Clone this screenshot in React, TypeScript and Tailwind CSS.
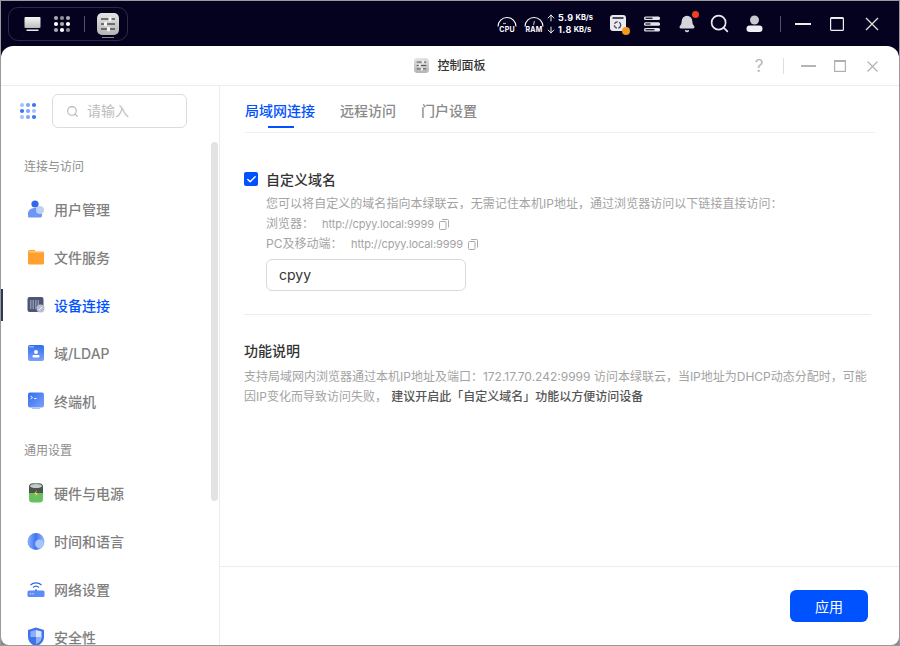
import React from "react";
import { Search, Check, ArrowUp, ArrowDown, Bell } from "lucide-react";

const font = { fontFamily: '"Inter","Noto Sans CJK SC",sans-serif' };

function Dots({ colors, size = 18 }: { colors: string[]; size?: number }) {
  const cells = [0, 1, 2, 3, 4, 5, 6, 7, 8];
  return (
    <svg width={size} height={size} viewBox="0 0 18 18">
      {cells.map((i) => (
        <circle key={i} cx={3 + (i % 3) * 6} cy={3 + Math.floor(i / 3) * 6} r="2.1" fill={colors[i]} />
      ))}
    </svg>
  );
}

function PanelIcon({ size }: { size: number }) {
  return (
    <svg width={size} height={size} viewBox="0 0 22 22">
      <defs>
        <linearGradient id="pg" x1="0" y1="0" x2="0" y2="1">
          <stop offset="0" stopColor="#e4e4e4" />
          <stop offset="1" stopColor="#b4b4b4" />
        </linearGradient>
      </defs>
      <rect width="22" height="22" rx="5" fill="url(#pg)" />
      <path d="M4 6h14M4 11h14M4 16h14" stroke="#4f4f4f" strokeWidth="1.4" />
      <g fill="#f4f4f4">
        <rect x="11.500" y="3.800" width="3" height="4.400" rx="1" />
        <rect x="7" y="8.800" width="3" height="4.400" rx="1" />
        <rect x="10" y="13.800" width="3" height="4.400" rx="1" />
      </g>
    </svg>
  );
}

function Gauge({ label, needle }: { label: string; needle: string }) {
  return (
    <div className="flex flex-col items-center w-[20px]">
      <svg width="20" height="12" viewBox="0 0 20 12" fill="none">
        <path d="M1 11.500a9 9 0 0 1 18 0" stroke="#fff" strokeWidth="1.100" />
        <path d={needle} stroke="#aaa" strokeWidth="1.200" />
      </svg>
      <span className="text-[7px] leading-[7px] font-bold text-white mt-[-1px] tracking-[0.2px]">{label}</span>
    </div>
  );
}

function CopyIcon() {
  return (
    <svg width="10" height="11" viewBox="0 0 10 11" fill="none" stroke="#aaaaaa" strokeWidth="1" className="ml-[5px] mt-[1px]">
      <rect x="0.500" y="2.500" width="6.500" height="8" rx="1" />
      <path d="M3 0.500h5.500a1 1 0 0 1 1 1v7" />
    </svg>
  );
}

function TopBar() {
  return (
    <div className="h-[45px] flex items-center justify-between shrink-0 pl-[7px] pr-[20px] text-white">
      <div className="h-[34px] w-[120px] rounded-[10px] border border-[#2c2a44] flex items-center pl-[15px]">
        <svg width="17" height="15" viewBox="0 0 17 15" className="mt-[1px]">
          <defs>
            <linearGradient id="mon" x1="0" y1="0" x2="0" y2="1">
              <stop offset="0" stopColor="#f8f8f8" />
              <stop offset="1" stopColor="#bbb" />
            </linearGradient>
          </defs>
          <rect x="0.500" y="0" width="16" height="11" rx="1" fill="url(#mon)" />
          <rect x="2.500" y="12.500" width="12" height="1.400" fill="#fff" />
        </svg>
        <div className="ml-[12px] mt-[1px]">
          <Dots size={18} colors={["#a9a9b3", "#8d8d98", "#a9a9b3", "#fff", "#a9a9b3", "#fff", "#a9a9b3", "#fff", "#8d8d98"]} />
        </div>
        <div className="w-px h-[16px] bg-[#55546a] ml-[13px]" />
        <div className="ml-[12px] relative">
          <PanelIcon size={22} />
          <div className="absolute left-[5px] right-[5px] bottom-[-3px] h-[1px] bg-[#888]" />
        </div>
      </div>
      <div className="flex items-center">
        <div className="flex items-center gap-[7px]">
          <Gauge label="CPU" needle="M6 8.500h3" />
          <Gauge label="RAM" needle="M10.500 6l-1 4" />
        </div>
        <div className="ml-[2px] w-[48px] flex flex-col text-[9px] leading-[12px] font-bold">
          <div className="flex items-center"><ArrowUp size={10} strokeWidth={2.200} /><span className="ml-[2px] tracking-[0.4px]">5.9</span><span className="text-[7.500px] ml-[2px]">KB/s</span></div>
          <div className="flex items-center"><ArrowDown size={10} strokeWidth={2.200} /><span className="ml-[2px] tracking-[0.4px]">1.8</span><span className="text-[7.500px] ml-[2px]">KB/s</span></div>
        </div>
        <div className="ml-[16px] relative w-[17px] h-[17px]">
          <svg width="17" height="17" viewBox="0 0 17 17" fill="none">
            <rect width="16" height="16" rx="3" fill="#e9e9ee" />
            <rect x="2.500" y="2" width="11" height="2" fill="#4a4a60" />
            <circle cx="7.500" cy="10" r="3.200" stroke="#4a4a60" strokeWidth="1.300" strokeDasharray="4 1.500" />
          </svg>
          <div className="absolute right-[-3px] bottom-[-3px] w-[8px] h-[8px] rounded-full bg-[#f39a1e]" />
        </div>
        <div className="ml-[17px]">
          <svg width="16" height="16" viewBox="0 0 16 16" fill="#e4e4ea">
            <rect y="0.500" width="16" height="3.600" rx="1.600" />
            <rect y="6.200" width="16" height="3.600" rx="1.600" />
            <rect y="11.900" width="16" height="3.600" rx="1.600" />
            <rect x="1.500" y="1.600" width="7" height="1.400" fill="#26243c" />
            <rect x="1.500" y="7.300" width="5" height="1.400" fill="#26243c" />
            <rect x="1.500" y="13" width="9" height="1.400" fill="#26243c" />
          </svg>
        </div>
        <div className="ml-[18px] relative">
          <Bell size={18} fill="#d5d5dc" stroke="#d5d5dc" />
          <div className="absolute top-[-4px] right-[-3px] w-[7px] h-[7px] rounded-full bg-[#f0401f]" />
        </div>
        <div className="ml-[13px]"><Search size={21} strokeWidth={1.900} color="#ececf0" /></div>
        <div className="ml-[16px]">
          <svg width="17" height="18" viewBox="0 0 17 18" fill="#f0f0f4">
            <circle cx="8.500" cy="5" r="4.500" fill="#c9c9d0" />
            <rect x="0.500" y="10.500" width="16" height="6.500" rx="3.200" />
          </svg>
        </div>
        <div className="ml-[17px] w-px h-[16px] bg-[#55546a]" />
        <div className="ml-[14px] w-[16px] h-[2px] bg-[#eeeeee]" />
        <svg width="14" height="14" viewBox="0 0 14 14" fill="none" className="ml-[19px]">
          <rect x="0.600" y="0.600" width="12.800" height="12.800" rx="1" stroke="#f0f0f0" strokeWidth="1.200" />
          <path d="M1 1.200h12" stroke="#f0f0f0" strokeWidth="1.500" />
        </svg>
        <svg width="14" height="14" viewBox="0 0 14 14" fill="none" className="ml-[21px]">
          <path d="M1 1l12 12M13 1L1 13" stroke="#e8e8e8" strokeWidth="1.200" />
        </svg>
      </div>
    </div>
  );
}

function UserIcon() {
  return (
    <svg width="18" height="18" viewBox="0 0 18 18">
      <circle cx="8" cy="4" r="3.600" fill="#3566e8" />
      <path d="M1 14c0-4 3-6 7-6s7 2 7 6-1 3.500-3 3.500H3c-2 0-2 0-2-3.500z" fill="#6c97f5" />
      <circle cx="13" cy="10" r="4" fill="#bcd0fb" />
    </svg>
  );
}
function FolderIcon() {
  return (
    <svg width="18" height="18" viewBox="0 0 18 18">
      <path d="M1.500 3a1 1 0 0 1 1-1h5l1.500 1.500H16a1 1 0 0 1 1 1V15a1.500 1.500 0 0 1-1.500 1.500h-13A1.500 1.500 0 0 1 1 15V3z" fill="#ffa02f" />
      <rect x="2" y="3.400" width="14" height="1" fill="#ffd9a6" />
    </svg>
  );
}
function DeviceIcon() {
  return (
    <svg width="18" height="18" viewBox="0 0 18 18">
      <rect x="0.500" y="1" width="16" height="15" rx="2" fill="#4d5676" />
      <path d="M3 4h1.500v9H3zM5.500 4H7v9H5.500zM8 4h1.500v9H8zM10.500 4H12v9h-1.500z" fill="#8d94ad" />
      <circle cx="13.500" cy="12.500" r="4" fill="#b9bdd2" />
      <path d="M12 14l3-3" stroke="#fff" strokeWidth="1" />
    </svg>
  );
}
function LdapIcon() {
  return (
    <svg width="18" height="18" viewBox="0 0 18 18">
      <defs>
        <linearGradient id="blue1" x1="0" y1="0" x2="0" y2="1">
          <stop offset="0" stopColor="#2f6cf0" />
          <stop offset="1" stopColor="#7fa2fa" />
        </linearGradient>
      </defs>
      <rect x="1" y="1" width="16" height="16" rx="2" fill="url(#blue1)" />
      <rect x="2" y="2.500" width="5" height="0.800" fill="#cfe0ff" />
      <circle cx="9" cy="8" r="2" fill="#fff" />
      <rect x="5.500" y="11" width="7" height="2.400" rx="1" fill="#fff" />
    </svg>
  );
}
function TermIcon() {
  return (
    <svg width="18" height="18" viewBox="0 0 18 18">
      <defs>
        <linearGradient id="blue2" x1="0" y1="0" x2="1" y2="1">
          <stop offset="0" stopColor="#2f6cf0" />
          <stop offset="1" stopColor="#7fa2fa" />
        </linearGradient>
      </defs>
      <rect x="1" y="0.500" width="16" height="15" rx="2" fill="url(#blue2)" />
      <rect x="5" y="16" width="8" height="1" fill="#a9c2fb" />
      <path d="M3.500 4l2 1.500-2 1.500" stroke="#fff" strokeWidth="0.900" fill="none" />
      <path d="M7 6.500h2.500" stroke="#fff" strokeWidth="0.900" />
    </svg>
  );
}
function PowerIcon() {
  return (
    <svg width="18" height="20" viewBox="0 0 18 20">
      <rect x="2" y="0.500" width="14" height="19" rx="3.500" fill="#66c05f" />
      <path d="M2 4a3.500 3.500 0 0 1 3.500-3.500h7A3.500 3.500 0 0 1 16 4v6H2z" fill="#4c5450" />
      <ellipse cx="9" cy="3" rx="6" ry="2" fill="#c5cbc7" />
      <path d="M10 7l-3 4h2l-1 3 3-4H9z" fill="#f6d33c" />
    </svg>
  );
}
function TimeIcon() {
  return (
    <svg width="19" height="19" viewBox="0 0 19 19">
      <defs>
        <linearGradient id="t1" x1="0" y1="0" x2="1" y2="0">
          <stop offset="0" stopColor="#8fb3fb" />
          <stop offset="0.500" stopColor="#3c73f0" />
          <stop offset="1" stopColor="#9fbffb" />
        </linearGradient>
      </defs>
      <circle cx="9.500" cy="9.500" r="9" fill="url(#t1)" />
      <circle cx="13" cy="12" r="4.500" fill="#a9c4fc" />
    </svg>
  );
}
function NetIcon() {
  return (
    <svg width="18" height="18" viewBox="0 0 18 18" fill="none">
      <path d="M3.500 5a8 8 0 0 1 11 0M6 7.500a4.500 4.500 0 0 1 6 0" stroke="#3566e8" strokeWidth="1.200" />
      <path d="M8 9.500h2V11H8z" fill="#3566e8" />
      <rect x="0.500" y="10.500" width="17" height="6.500" rx="1.500" fill="#5c8cf5" />
      <path d="M3 13.800h1.200M5.500 13.800h1.200" stroke="#fff" strokeWidth="1" />
    </svg>
  );
}
function ShieldIcon() {
  return (
    <svg width="18" height="20" viewBox="0 0 18 20">
      <path d="M9 0.500l8 2.500v7c0 5-4 8-8 9.500-4-1.500-8-4.500-8-9.500V3z" fill="#3f73ee" />
      <path d="M9 3l5.500 1.600V10c0 3.500-2.800 5.600-5.500 6.800z" fill="#d8e4fd" />
      <path d="M9 3L3.500 4.600V10H9zM9 10h5.500c0 3.500-2.800 5.600-5.500 6.800z" fill="#8fb0f8" />
    </svg>
  );
}

function NavItem({ icon, label, active }: { icon: React.ReactNode; label: string; active?: boolean }) {
  return (
    <div className="relative h-[48px] flex items-center pl-[26px]">
      {active && <div className="absolute left-0 top-[8px] h-[32px] w-[2px] bg-[#2f3a59]" />}
      <div className="w-[18px] h-[20px] flex items-center justify-center shrink-0">{icon}</div>
      <span className={`ml-[9px] text-[14px] ${active ? "text-[#0052ff] font-medium" : "text-[#7f7f7f] font-medium"}`}>{label}</span>
    </div>
  );
}

function Sidebar() {
  return (
    <aside className="relative w-[219px] shrink-0 border-r border-[#ececec] overflow-hidden">
      <div className="flex items-center h-[50px] pl-[18px]">
        <Dots size={18} colors={["#a6c3fd", "#7ea6fb", "#3a76f7", "#3a76f7", "#7ea6fb", "#a6c3fd", "#a6c3fd", "#7ea6fb", "#3a76f7"]} />
        <div className="ml-[15px] w-[135px] h-[34px] border border-[#dcdcdc] rounded-[6px] flex items-center pl-[13px]">
          <Search size={13} color="#b5b5b5" />
          <span className="ml-[8px] mt-[-1px] text-[14px] text-[#bdbdbd]">请输入</span>
        </div>
      </div>
      <div className="text-[12px] text-[#8e8e8e] pl-[23px] mt-[21px] h-[20px] leading-[20px]">连接与访问</div>
      <div className="mt-[8px]">
        <NavItem icon={<UserIcon />} label="用户管理" />
        <NavItem icon={<FolderIcon />} label="文件服务" />
        <NavItem icon={<DeviceIcon />} label="设备连接" active />
        <NavItem icon={<LdapIcon />} label="域/LDAP" />
        <NavItem icon={<TermIcon />} label="终端机" />
      </div>
      <div className="text-[12px] text-[#8e8e8e] pl-[23px] mt-[16px] h-[20px] leading-[20px]">通用设置</div>
      <div className="mt-[8px]">
        <NavItem icon={<PowerIcon />} label="硬件与电源" />
        <NavItem icon={<TimeIcon />} label="时间和语言" />
        <NavItem icon={<NetIcon />} label="网络设置" />
        <NavItem icon={<ShieldIcon />} label="安全性" />
      </div>
      <div className="absolute left-[210px] top-[56px] w-[7px] h-[359px] rounded-full bg-[#e3e3e3]" />
    </aside>
  );
}

function Main() {
  return (
    <main className="flex-1 min-w-0 flex flex-col">
      <div className="flex-1 pl-[24px] pr-[24px]">
        <div className="ml-px h-[47px] border-b border-[#f0f0f0] flex items-end gap-[25px] pb-[4px]">
          {["局域网连接", "远程访问", "门户设置"].map((t, i) => (
            <div key={t} className={`relative h-[34px] text-[14px] leading-[34px] font-medium ${i === 0 ? "text-[#0052ff]" : "text-[#8a8a8a]"}`}>
              {t}
              {i === 0 && <div className="absolute bottom-[0px] left-[23px] w-[26px] h-[2px] bg-[#0052ff]" />}
            </div>
          ))}
        </div>
        <div className="mt-[37px] flex items-center h-[18px]">
          <div className="w-[14px] h-[14px] rounded-[2px] bg-[#0052ff] flex items-center justify-center">
            <Check size={11} color="#fff" strokeWidth={3} />
          </div>
          <span className="ml-[8px] text-[14px] font-medium text-[#333]">自定义域名</span>
        </div>
        <div className="ml-[22px] text-[12px] text-[#a3a3a3] leading-[20px] mt-[6px]">
          <div className="tracking-[0.04px]">您可以将自定义的域名指向本绿联云，无需记住本机IP地址，通过浏览器访问以下链接直接访问：</div>
          <div className="flex items-center">
            <span className="w-[56px]">浏览器：</span>
            <span className="text-[11px] tracking-[-0.1px]">http://cpyy.local:9999</span>
            <CopyIcon />
          </div>
          <div className="flex items-center">
            <span className="w-[85px]">PC及移动端：</span>
            <span className="text-[11px] tracking-[-0.1px]">http://cpyy.local:9999</span>
            <CopyIcon />
          </div>
          <div className="mt-[5px] w-[200px] h-[32px] border border-[#d9d9d9] rounded-[6px] flex items-center pl-[12px] text-[14px] text-[#333]">cpyy</div>
        </div>
        <div className="mt-[23px] border-t border-[#ececec] mr-[4px]" />
        <div className="mt-[27px] text-[14px] font-medium text-[#333] h-[18px] leading-[18px]">功能说明</div>
        <div className="mt-[7px] text-[12px] leading-[20px] text-[#a3a3a3] mr-[4px]">
          <div>支持局域网内浏览器通过本机IP地址及端口：172.17.70.242:9999 访问本绿联云，当IP地址为DHCP动态分配时，可能</div>
          <div>
            因IP变化而导致访问失败， <span className="ml-[1px] font-medium text-[#555]">建议开启此「自定义域名」功能以方便访问设备</span>
          </div>
        </div>
      </div>
      <div className="h-[79px] shrink-0 border-t border-[#ececec] flex items-start justify-end pr-[31px] pt-[23px]">
        <button className="w-[78px] h-[32px] bg-[#0052ff] rounded-[6px] text-white text-[14px]">应用</button>
      </div>
    </main>
  );
}

export default function App() {
  return (
    <div style={font} className="w-[900px] h-[646px] overflow-hidden bg-[linear-gradient(#05021f_50%,#8a8a8a_50%)] border border-[#9a9a9a] flex flex-col relative">
      <TopBar />
      <div className="flex-1 min-h-0 bg-white rounded-t-[12px] rounded-b-[8px] flex flex-col overflow-hidden">
        <div className="h-[40px] shrink-0 border-b border-[#ececec] relative flex items-center justify-center">
          <div className="flex items-center gap-[8px]">
            <PanelIcon size={15} />
            <span className="text-[12px] text-[#333] font-medium">控制面板</span>
          </div>
          <div className="absolute right-[21px] top-0 h-[40px] flex items-center text-[#b5b5b5]">
            <span className="text-[17px] leading-[18px] w-[12px] text-center">?</span>
            <div className="w-px h-[16px] bg-[#dedede] ml-[18px]" />
            <div className="ml-[17px] w-[15px] h-[2px] bg-[#b5b5b5]" />
            <svg width="12" height="12" viewBox="0 0 12 12" fill="none" className="ml-[18px]">
              <rect x="0.600" y="0.600" width="10.800" height="10.800" stroke="#b0b0b0" strokeWidth="1.200" />
              <path d="M0 1.200h12" stroke="#b0b0b0" strokeWidth="1.800" />
            </svg>
            <svg width="11" height="11" viewBox="0 0 11 11" fill="none" className="ml-[21px]">
              <path d="M0.500 0.500l10 10M10.500 0.500l-10 10" stroke="#b0b0b0" strokeWidth="1.100" />
            </svg>
          </div>
        </div>
        <div className="flex-1 min-h-0 flex">
          <Sidebar />
          <Main />
        </div>
      </div>
    </div>
  );
}
